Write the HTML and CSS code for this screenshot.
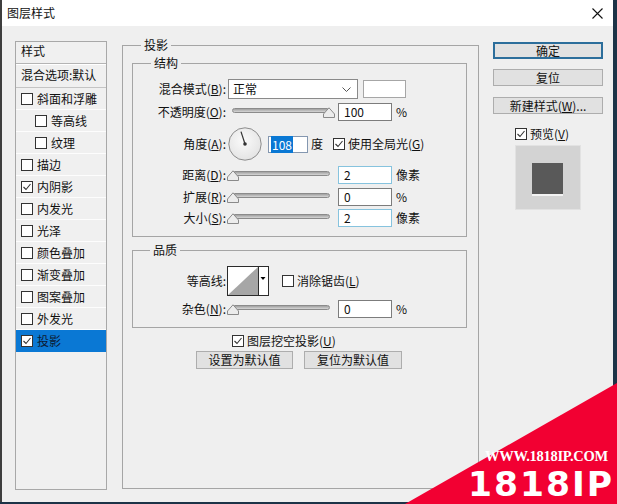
FILE: index.html
```html
<!DOCTYPE html>
<html lang="zh-CN">
<head>
<meta charset="utf-8">
<title>图层样式</title>
<link rel="stylesheet" href="styles.css">
</head>
<body>
<div class="window">
  <div class="titlebar">
    <span class="title">图层样式</span>
    <svg class="close" width="11" height="11" viewBox="0 0 11 11"><path d="M0.5 0.5 L10.5 10.5 M10.5 0.5 L0.5 10.5" stroke="#111" stroke-width="1.1" fill="none"/></svg>
  </div>
  <div class="content">
    <div class="stylelist">
      <div class="sl-head">样式</div>
      <div class="sl-blend">混合选项:默认</div>
      <div class="sl-item"><span class="cb"></span>斜面和浮雕</div>
      <div class="sl-item sub"><span class="cb"></span>等高线</div>
      <div class="sl-item sub"><span class="cb"></span>纹理</div>
      <div class="sl-item"><span class="cb"></span>描边</div>
      <div class="sl-item"><span class="cb"><svg width="10" height="10" viewBox="0 0 10 10"><polyline points="1.5,5 4,7.5 8.5,2" fill="none" stroke="#333" stroke-width="1.1"/></svg></span>内阴影</div>
      <div class="sl-item"><span class="cb"></span>内发光</div>
      <div class="sl-item"><span class="cb"></span>光泽</div>
      <div class="sl-item"><span class="cb"></span>颜色叠加</div>
      <div class="sl-item"><span class="cb"></span>渐变叠加</div>
      <div class="sl-item"><span class="cb"></span>图案叠加</div>
      <div class="sl-item"><span class="cb"></span>外发光</div>
      <div class="sl-item sel"><span class="cb"><svg width="10" height="10" viewBox="0 0 10 10"><polyline points="1.5,5 4,7.5 8.5,2" fill="none" stroke="#333" stroke-width="1.1"/></svg></span>投影</div>
    </div>

    <fieldset class="group main">
      <legend>投影</legend>
      <div class="main-inner">
        <fieldset class="group">
          <legend>结构</legend>
          <div class="form">
            <div class="row h20">
              <span class="lbl">混合模式(<u>B</u>):</span>
              <div class="select">正常<svg class="chev" width="9" height="5" viewBox="0 0 9 5"><polyline points="0.5,0.5 4.5,4.5 8.5,0.5" fill="none" stroke="#555" stroke-width="1"/></svg></div>
              <div class="swatch"></div>
            </div>
            <div class="row h20">
              <span class="lbl">不透明度(<u>O</u>):</span>
              <div class="slider"><div class="track"></div><svg class="thumb right" width="12" height="11" viewBox="0 0 12 11"><polygon points="0.5,10.5 0.5,7 6,0.8 11.5,7 11.5,10.5" fill="#ececec" stroke="#8a8a8a"/></svg></div>
              <div class="field">100</div>
              <span class="unit">%</span>
            </div>
            <div class="row h38">
              <span class="lbl">角度(<u>A</u>):</span>
              <svg class="dial" width="34" height="34" viewBox="0 0 34 34">
                <defs><radialGradient id="dg" cx="0.45" cy="0.4" r="0.6"><stop offset="0" stop-color="#fafafa"/><stop offset="1" stop-color="#e4e4e4"/></radialGradient></defs>
                <circle cx="17" cy="17" r="16.2" fill="url(#dg)" stroke="#8c8c8c" stroke-width="1"/>
                <line x1="17" y1="17" x2="13" y2="4.6" stroke="#333" stroke-width="1.2"/>
                <circle cx="17" cy="17" r="1.8" fill="#333"/>
              </svg>
              <div class="field angle"><span class="selected">108</span></div>
              <span class="unit deg">度</span>
              <span class="cb global"><svg width="10" height="10" viewBox="0 0 10 10"><polyline points="1.5,5 4,7.5 8.5,2" fill="none" stroke="#333" stroke-width="1.1"/></svg></span>
              <span class="cbtext">使用全局光(<u>G</u>)</span>
            </div>
            <div class="row h18">
              <span class="lbl">距离(<u>D</u>):</span>
              <div class="slider"><div class="track"></div><svg class="thumb left" width="12" height="11" viewBox="0 0 12 11"><polygon points="0.5,10.5 0.5,7 6,0.8 11.5,7 11.5,10.5" fill="#ececec" stroke="#8a8a8a"/></svg></div>
              <div class="field focus">2</div>
              <span class="unit">像素</span>
            </div>
            <div class="row h19">
              <span class="lbl">扩展(<u>R</u>):</span>
              <div class="slider"><div class="track"></div><svg class="thumb left" width="12" height="11" viewBox="0 0 12 11"><polygon points="0.5,10.5 0.5,7 6,0.8 11.5,7 11.5,10.5" fill="#ececec" stroke="#8a8a8a"/></svg></div>
              <div class="field">0</div>
              <span class="unit">%</span>
            </div>
            <div class="row h18">
              <span class="lbl">大小(<u>S</u>):</span>
              <div class="slider"><div class="track"></div><svg class="thumb left" width="12" height="11" viewBox="0 0 12 11"><polygon points="0.5,10.5 0.5,7 6,0.8 11.5,7 11.5,10.5" fill="#ececec" stroke="#8a8a8a"/></svg></div>
              <div class="field focus">2</div>
              <span class="unit">像素</span>
            </div>
          </div>
        </fieldset>

        <fieldset class="group quality">
          <legend>品质</legend>
          <div class="form q">
            <div class="row h30">
              <span class="lbl">等高线:</span>
              <svg class="contour" width="42" height="30" viewBox="0 0 42 30">
                <rect x="0.5" y="0.5" width="41" height="29" fill="#fff" stroke="#2b2b2b"/>
                <polygon points="1,29 31,1 31,29" fill="#a6a6a6"/>
                <line x1="31.5" y1="0" x2="31.5" y2="30" stroke="#2b2b2b"/>
                <polygon points="33.5,11 38.5,11 36,14" fill="#000"/>
              </svg>
              <span class="cb aa"></span>
              <span class="cbtext">消除锯齿(<u>L</u>)</span>
            </div>
            <div class="row h18">
              <span class="lbl">杂色(<u>N</u>):</span>
              <div class="slider"><div class="track"></div><svg class="thumb left" width="12" height="11" viewBox="0 0 12 11"><polygon points="0.5,10.5 0.5,7 6,0.8 11.5,7 11.5,10.5" fill="#ececec" stroke="#8a8a8a"/></svg></div>
              <div class="field">0</div>
              <span class="unit">%</span>
            </div>
          </div>
        </fieldset>

        <div class="knockout">
          <span class="cb"><svg width="10" height="10" viewBox="0 0 10 10"><polyline points="1.5,5 4,7.5 8.5,2" fill="none" stroke="#333" stroke-width="1.1"/></svg></span>
          <span class="cbtext">图层挖空投影(<u>U</u>)</span>
        </div>
        <div class="defaults">
          <div class="btn wide">设置为默认值</div>
          <div class="btn wide">复位为默认值</div>
        </div>
      </div>
    </fieldset>

    <div class="side">
      <div class="btn primary">确定</div>
      <div class="btn s2">复位</div>
      <div class="btn s3">新建样式(<u>W</u>)...</div>
      <div class="preview-row">
        <span class="cb"><svg width="10" height="10" viewBox="0 0 10 10"><polyline points="1.5,5 4,7.5 8.5,2" fill="none" stroke="#333" stroke-width="1.1"/></svg></span>
        <span class="cbtext">预览(<u>V</u>)</span>
      </div>
      <div class="preview"><div class="preview-sq"></div></div>
    </div>
  </div>
</div>

<div class="watermark">
  <svg class="wm-tri" width="212" height="121" viewBox="0 0 212 121"><polygon points="212,0 212,121 0,121" fill="#f20032"/></svg>
  <span class="wm-url">WWW.1818IP.COM</span>
  <span class="wm-big">1818IP</span>
</div>
</body>
</html>
```

FILE: styles.css
```css
html {
  background: #1c3347;
}
body {
  margin: 0;
  width: 617px;
  height: 504px;
  position: relative;
  overflow: hidden;
  font-family: "Noto Sans CJK SC", "Microsoft YaHei", sans-serif;
  font-size: 12px;
  line-height: 16px;
  color: #111;
}
u {
  text-decoration: underline;
  text-underline-offset: 1px;
}

.window {
  width: 613px;
  height: 502px;
  box-sizing: border-box;
  border-left: 2px solid #3e3e3e;
  background: #efefef;
  display: flex;
  flex-direction: column;
}

.titlebar {
  height: 26px;
  flex: none;
  background: #fff;
  display: flex;
  align-items: center;
  justify-content: space-between;
  padding: 0 10px 0 5px;
}
.close { display: block; }

.content {
  display: flex;
  align-items: flex-start;
  padding: 11px 0 0 13px;
}

/* style list */
.stylelist {
  width: 92px;
  height: 449px;
  box-sizing: border-box;
  margin-top: 4px;
  border: 1px solid #a8a8a8;
  background: #f0f0f0;
  flex: none;
}
.sl-head {
  height: 21px;
  line-height: 18px;
  padding-left: 5px;
  border-bottom: 1px solid #b4b4b4;
  box-shadow: 0 1px 0 #fff;
}
.sl-blend {
  height: 22px;
  line-height: 20px;
  margin-top: 1px;
  padding-left: 5px;
  border-bottom: 1px solid #c4c4c4;
}
.sl-item {
  height: 21px;
  display: flex;
  align-items: center;
  padding-left: 5px;
  border-bottom: 1px solid #fdfdfd;
}
.sl-item.sub { padding-left: 19px; }
.sl-item .cb { margin-right: 4px; }
.sl-item.sel {
  background: #0a78d4;
  color: #0c1a33;
  border-bottom-color: #0a78d4;
}

.cb {
  width: 12px;
  height: 12px;
  box-sizing: border-box;
  border: 1px solid #333;
  background: #fff;
  flex: none;
  display: flex;
  align-items: center;
  justify-content: center;
}
.cb svg { display: block; }

/* group boxes */
fieldset.group {
  margin: 0;
  padding: 0;
  border: 1px solid #a5a5a5;
  min-width: 0;
}
fieldset.group legend {
  padding: 0 3px;
  margin-left: 18px;
  line-height: 16px;
}
fieldset.main {
  width: 357px;
  height: 452px;
  box-sizing: border-box;
  margin-left: 15px;
  flex: none;
}
.main-inner {
  padding: 2px 11px 0 9px;
}
fieldset.quality {
  margin-top: 5px;
}
fieldset.quality legend { margin-left: 17px; }

.form {
  display: flex;
  flex-direction: column;
  gap: 3px;
  padding: 8px 0 9px;
}
.form.q { gap: 4px; }
.row {
  display: flex;
  align-items: center;
}
.h18 { height: 18px; }
.h19 { height: 19px; }
.h20 { height: 20px; }
.h30 { height: 30px; }
.h38 { height: 38px; }

.lbl {
  width: 93px;
  flex: none;
  text-align: right;
  white-space: nowrap;
}

.select {
  margin-left: 2px;
  width: 130px;
  height: 20px;
  box-sizing: border-box;
  border: 1px solid #8a8a8a;
  background: #fff;
  padding-left: 4px;
  display: flex;
  align-items: center;
  justify-content: space-between;
  padding-right: 6px;
}
.swatch {
  margin-left: 5px;
  width: 43px;
  height: 18px;
  box-sizing: border-box;
  border: 1px solid #a6a6a6;
  background: #fff;
}

.slider {
  position: relative;
  margin-left: 6px;
  width: 98px;
  height: 12px;
  flex: none;
}
.track {
  margin-top: 2px;
  height: 5px;
  box-sizing: border-box;
  border: 1px solid #8b8b8b;
  border-radius: 3px;
  background: linear-gradient(#a0a0a0, #d6d6d6);
}
.thumb {
  position: absolute;
  top: 1px;
}
.thumb.left { left: -5px; }
.thumb.right { right: -5px; }

.field {
  margin-left: 8px;
  width: 54px;
  height: 18px;
  box-sizing: border-box;
  border: 1px solid #7c7c7c;
  background: #fff;
  padding-left: 5px;
  line-height: 16px;
  flex: none;
}
.field.focus { border-color: #86c3de; }
.unit { margin-left: 4px; }

.dial {
  display: block;
  margin-left: 2px;
  flex: none;
}
.field.angle {
  margin-left: 6px;
  width: 40px;
  height: 17px;
  padding-left: 2px;
  line-height: 15px;
  border-color: #8497b0;
}
.selected {
  background: #0a78d4;
  color: #fff;
  padding: 0 1px;
}
.unit.deg { margin-left: 3px; }
.cb.global { margin-left: 10px; }
.cbtext { margin-left: 3px; white-space: nowrap; }

.contour {
  display: block;
  margin-left: 1px;
  flex: none;
}
.cb.aa { margin-left: 13px; }

.knockout {
  margin-top: 6px;
  height: 13px;
  display: flex;
  align-items: center;
  padding-left: 100px;
}
.defaults {
  margin-top: 4px;
  display: flex;
  gap: 11px;
  padding-left: 64px;
}

.btn {
  height: 17px;
  box-sizing: border-box;
  border: 1px solid #adadad;
  background: #e1e1e1;
  text-align: center;
  line-height: 15px;
  white-space: nowrap;
}
.btn.wide { width: 97px; height: 18px; line-height: 16px; }
.defaults .btn.wide + .btn.wide { width: 98px; }

.side {
  margin-left: 14px;
  margin-top: 5px;
  width: 110px;
  display: flex;
  flex-direction: column;
  flex: none;
}
.btn.primary {
  border: 2px solid #2c6e9b;
  line-height: 13px;
}
.btn.s2 { margin-top: 10px; }
.btn.s3 { margin-top: 11px; }
.preview-row {
  margin-top: 13px;
  height: 14px;
  display: flex;
  align-items: center;
  padding-left: 22px;
}
.preview {
  margin: 4px 0 0 22px;
  width: 66px;
  height: 65px;
  box-sizing: border-box;
  border: 1px solid #e2e2e2;
  background: #d3d3d3;
  padding: 17px 0 0 16px;
}
.preview-sq {
  width: 31px;
  height: 31px;
  background: #595959;
  box-shadow: 0 2px 0 #f2f2f2;
}

/* watermark overlay */
.watermark {
  position: absolute;
  left: 0;
  top: 0;
  width: 617px;
  height: 504px;
  pointer-events: none;
}
.wm-tri {
  position: absolute;
  right: 0;
  bottom: 0;
  display: block;
}
.wm-url {
  position: absolute;
  left: 485px;
  top: 449px;
  font-family: "Liberation Serif", serif;
  font-weight: bold;
  font-size: 14.5px;
  line-height: 14px;
  letter-spacing: -0.3px;
  color: #fff;
  white-space: nowrap;
}
.wm-big {
  position: absolute;
  left: 468px;
  top: 467px;
  font-family: "DejaVu Sans", sans-serif;
  font-weight: bold;
  font-size: 34.5px;
  line-height: 34px;
  letter-spacing: 2px;
  color: #fff;
  white-space: nowrap;
}
```
